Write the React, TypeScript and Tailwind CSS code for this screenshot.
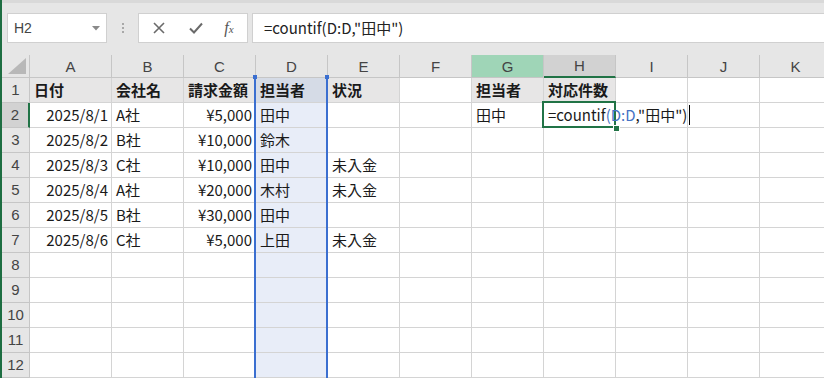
import type { ReactNode } from 'react'

type Cell = { text?: ReactNode; right?: boolean; bold?: boolean }

const COLS = ['A', 'B', 'C', 'D', 'E', 'F', 'G', 'H', 'I', 'J', 'K']
const ROW_COUNT = 12

const r = (text: string): Cell => ({ text, right: true })
const l = (text: string): Cell => ({ text })
const b = (text: string): Cell => ({ text, bold: true })

// 1行目は見出し、2〜7行目がデータ
const DATA: Record<number, Cell[]> = {
  1: [b('日付'), b('会社名'), b('請求金額'), b('担当者'), b('状況'), {}, b('担当者'), b('対応件数')],
  2: [r('2025/8/1'), l('A社'), r('¥5,000'), l('田中'), {}, {}, l('田中')],
  3: [r('2025/8/2'), l('B社'), r('¥10,000'), l('鈴木')],
  4: [r('2025/8/3'), l('C社'), r('¥10,000'), l('田中'), l('未入金')],
  5: [r('2025/8/4'), l('A社'), r('¥20,000'), l('木村'), l('未入金')],
  6: [r('2025/8/5'), l('B社'), r('¥30,000'), l('田中')],
  7: [r('2025/8/6'), l('C社'), r('¥5,000'), l('上田'), l('未入金')],
}

const FONT = "font-['Noto_Sans_CJK_JP',sans-serif]"

function cellBg(row: number, col: number) {
  if (col === 3) return row === 1 ? 'bg-[#d5dbe6]' : 'bg-[#e8edf8]'
  if (row === 1 && col !== 5 && col <= 7) return 'bg-[#e7e6e6]'
  return 'bg-white'
}

function FormulaBar() {
  return (
    <div className="h-[55px] border-t-[3px] border-[#d9d9d9] bg-[#e6e6e6] pt-[10px] pl-[5px] flex">
      <div className="w-[100px] h-[30px] bg-white border border-[#d0d0d0] flex items-center justify-between pl-[6px] pr-[6px]">
        <span className="font-['Liberation_Sans',sans-serif] text-[14px] text-[#444]">H2</span>
        <svg width="8" height="5" viewBox="0 0 8 5">
          <path d="M0 0 L8 0 L4 4.5 Z" fill="#8a8a8a" />
        </svg>
      </div>
      <div className="w-[31px] h-[30px] flex flex-col items-center justify-center gap-[2px]">
        <div className="w-[2px] h-[2px] bg-[#a8a8a8]" />
        <div className="w-[2px] h-[2px] bg-[#a8a8a8]" />
        <div className="w-[2px] h-[2px] bg-[#a8a8a8]" />
      </div>
      <div className="w-[110px] h-[30px] bg-white border border-[#d0d0d0] flex items-center">
        <div className="w-[38px] flex justify-center pl-[2px]">
          <svg width="12" height="12" viewBox="0 0 12 12">
            <path d="M1 1 L11 11 M11 1 L1 11" stroke="#6a6a6a" strokeWidth="1.6" />
          </svg>
        </div>
        <div className="w-[38px] flex justify-center">
          <svg width="14" height="12" viewBox="0 0 14 12">
            <path d="M1 6.5 L5 10.5 L13 1.5" stroke="#6a6a6a" strokeWidth="2" fill="none" />
          </svg>
        </div>
        <div className="flex-1 flex justify-center pr-[4px]">
          <span className="font-['Liberation_Serif',serif] italic text-[16px] text-[#555]">
            f<span className="text-[11px]">x</span>
          </span>
        </div>
      </div>
      <div className={`ml-[4px] flex-1 h-[30px] bg-white border border-[#d0d0d0] border-r-0 flex items-center pl-[11px] ${FONT} text-[15px] text-[#222]`}>
        =countif(D:D,"田中")
      </div>
    </div>
  )
}

function Sheet() {
  const rows = Array.from({ length: ROW_COUNT }, (_, i) => i + 1)
  return (
    <div className="relative">
      <div className="grid grid-cols-[28px_82px_72px_72px_72px_72px_72px_72px_72px_72px_72px_72px] grid-rows-[23px_repeat(12,25px)] w-[852px]">
        {/* 左上の全選択ボタン */}
        <div className="bg-[#e6e6e6] border-r border-b border-[#c6c6c6] flex items-end justify-end pr-[3px] pb-[3px]">
          <svg width="18" height="16" viewBox="0 0 18 16">
            <path d="M18 0 L18 16 L0 16 Z" fill="#b8b8b8" />
          </svg>
        </div>
        {COLS.map((c, i) => (
          <div
            key={c}
            className={`border-r border-b border-[#c6c6c6] flex items-center justify-center font-['Liberation_Sans',sans-serif] text-[15px] text-[#444] pt-[2px] ${
              i === 6 ? 'bg-[#9fd5b7]' : i === 7 ? 'bg-[#d2d2d2] border-b-2 border-b-[#217346]' : 'bg-[#e6e6e6]'
            }`}
          >
            {c}
          </div>
        ))}
        {rows.map((row) => (
          <RowCells key={row} row={row} />
        ))}
      </div>

      {/* 数式で参照中の D 列の枠 */}
      <div className="absolute left-[252px] top-[22px] w-[74px] bottom-0 border-x-2 border-[#3b6fd0] pointer-events-none" />
      <div className="absolute left-[251px] top-[20px] w-[4px] h-[4px] bg-[#3b6fd0]" />
      <div className="absolute left-[323px] top-[20px] w-[4px] h-[4px] bg-[#3b6fd0]" />

      {/* アクティブセル H2 — 入力中の数式は右のセルへはみ出す */}
      <div className="absolute left-[540px] top-[46px] w-[74px] h-[27px] border-2 border-[#217346] pointer-events-none" />
      <div className="absolute left-[611px] top-[70px] w-[5px] h-[5px] bg-[#217346] border border-white box-content" />
      <div className={`absolute left-[546px] top-[47px] h-[25px] flex items-center whitespace-nowrap pt-[1px] ${FONT} text-[15px] text-[#1a1a1a]`}>
        =countif<span className="text-[#4472c4]">(D:D</span>,"田中")
        <span className="ml-[2px] w-[1px] h-[20px] bg-black" />
      </div>
    </div>
  )
}

function RowCells({ row }: { row: number }) {
  const data = DATA[row] ?? []
  const active = row === 2
  return (
    <>
      <div
        className={`border-b border-[#c6c6c6] flex items-center justify-center font-['Liberation_Sans',sans-serif] text-[15px] text-[#444] pt-[1px] ${
          active ? 'bg-[#d2d2d2] border-r-2 border-r-[#217346]' : 'bg-[#e6e6e6] border-r border-r-[#c6c6c6]'
        }`}
      >
        {row}
      </div>
      {COLS.map((c, ci) => {
        const cell = data[ci] ?? {}
        return (
          <div
            key={c}
            className={`border-r border-b border-[#d4d4d4] flex items-center whitespace-nowrap ${FONT} text-[15px] text-[#1a1a1a] pt-[1px] ${cellBg(row, ci)} ${
              cell.right ? 'justify-end pr-[3px]' : 'pl-[4px]'
            } ${cell.bold ? 'font-bold' : ''}`}
          >
            {cell.text}
          </div>
        )
      })}
    </>
  )
}

export default function App() {
  return (
    <div className="w-[824px] h-[378px] overflow-hidden bg-[#e6e6e6] flex">
      <div className="w-[2px] shrink-0 bg-[#1e6e42]" />
      <div className="flex-1 min-w-0">
        <FormulaBar />
        <Sheet />
      </div>
    </div>
  )
}
